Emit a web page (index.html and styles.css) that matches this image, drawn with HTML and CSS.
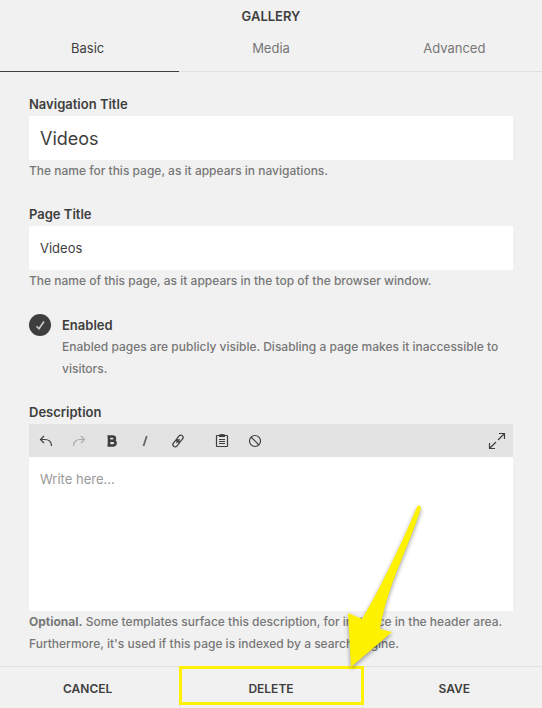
FILE: index.html
```html
<!DOCTYPE html>
<html lang="en">
<head>
    <meta charset="utf-8">
    <meta name="viewport" content="width=device-width, initial-scale=1">
    <title>Gallery Settings</title>
    <link rel="stylesheet" href="styles.css">
</head>
<body>
    <form class="dialog">
        <header class="dialog-header">
            <h1>GALLERY</h1>
            <nav class="tabs">
                <button type="button" class="tab active">Basic</button>
                <button type="button" class="tab">Media</button>
                <button type="button" class="tab">Advanced</button>
            </nav>
        </header>

        <main class="content">
            <div class="field">
                <label for="navTitle">Navigation Title</label>
                <input type="text" id="navTitle" class="large" value="Videos">
                <p class="help">The name for this page, as it appears in navigations.</p>
            </div>

            <div class="field">
                <label for="pageTitle">Page Title</label>
                <input type="text" id="pageTitle" value="Videos">
                <p class="help">The name of this page, as it appears in the top of the browser window.</p>
            </div>

            <div class="toggle">
                <span class="check">
                    <input type="checkbox" id="enabled" checked>
                    <svg viewBox="0 0 22 22" aria-hidden="true"><path d="M7.5 12.2 10 14.7 15 7.5"/></svg>
                </span>
                <div>
                    <label for="enabled">Enabled</label>
                    <p class="help">Enabled pages are publicly visible. Disabling a page makes it inaccessible to visitors.</p>
                </div>
            </div>

            <div class="field">
                <label for="description">Description</label>
                <div class="toolbar">
                    <button type="button" aria-label="Undo">
                        <svg viewBox="0 0 18 18"><path d="M7 4 3.5 7.5 7 11M3.7 7.5H7.5C11.5 7.5 14.5 9.5 14.5 14"/></svg>
                    </button>
                    <button type="button" aria-label="Redo" class="dim">
                        <svg viewBox="0 0 18 18"><path d="M11 4 14.5 7.5 11 11M14.3 7.5H10.5C6.5 7.5 3.5 9.5 3.5 14"/></svg>
                    </button>
                    <button type="button" aria-label="Bold">
                        <svg viewBox="0 0 18 18"><path class="thick" d="M4.5 4.5H9.5C12.7 4.5 12.7 8.7 9.5 8.7H5.5M9.5 8.7C13.6 8.7 13.6 13.5 9.7 13.5H4.5M6 3.2V14.8"/></svg>
                    </button>
                    <button type="button" aria-label="Italic">
                        <svg viewBox="0 0 18 18"><path class="medium" d="M10.8 4 7.5 14"/></svg>
                    </button>
                    <button type="button" aria-label="Link">
                        <svg viewBox="0 0 18 18"><g transform="rotate(-52 9 9)"><rect x="2.2" y="6.7" width="7.6" height="4.6" rx="2.3"/><rect x="8.2" y="6.7" width="7.6" height="4.6" rx="2.3"/><path d="M6.5 9H11.5"/></g></svg>
                    </button>
                    <button type="button" aria-label="Paste" class="group">
                        <svg viewBox="0 0 18 18"><rect x="3.5" y="3.5" width="11" height="11" rx="0.5"/><path class="fill" d="M6 2.5H7.5V2H10.5V2.5H12V5H6Z"/><path d="M6 7.5H12M6 9.5H12M6 11.5H12"/></svg>
                    </button>
                    <button type="button" aria-label="Clear formatting">
                        <svg viewBox="0 0 18 18"><circle cx="9" cy="9" r="5.5"/><path d="M5 5 13 13"/></svg>
                    </button>
                    <button type="button" aria-label="Expand" class="expand">
                        <svg viewBox="0 0 18 18"><path d="M10 8 16 2M11 1.5H16.5V7M8 10 2 16M1.5 11V16.5H7"/></svg>
                    </button>
                </div>
                <textarea id="description" placeholder="Write here..."></textarea>
                <p class="help"><strong>Optional.</strong> Some templates surface this description, for instance in the header area. Furthermore, it's used if this page is indexed by a search engine.</p>
            </div>
        </main>

        <footer class="actions">
            <button type="button">CANCEL</button>
            <div class="marked">
                <button type="button">DELETE</button>
                <span class="highlight"></span>
                <svg class="arrow" viewBox="0 0 52 168" aria-hidden="true"><path d="M4 164 1 110 15 116C34 84 53 44 70 4Q72.500 0 74 5C62 44 41 80 33 126L45 129Z"/></svg>
            </div>
            <button type="button">SAVE</button>
        </footer>
    </form>
</body>
</html>
```
FILE: styles.css
```css
* {
    box-sizing: border-box;
}
body {
    margin: 0;
    background-color: #f1f1f1;
    color: #3e3e3e;
    font-family: Inter, "Liberation Sans", sans-serif;
    font-size: 13px;
    overflow-x: hidden;
}
button, input, textarea {
    font: inherit;
    color: inherit;
    border: none;
    border-radius: 0;
    margin: 0;
    outline: none;
}
button {
    background: none;
    padding: 0;
    cursor: pointer;
}
.dialog {
    display: flex;
    flex-direction: column;
    min-height: 100vh;
}
h1 {
    margin: 0;
    font-size: 13px;
    font-weight: 600;
    line-height: 32px;
    text-align: center;
}
.tabs, .actions {
    display: grid;
    grid-template-columns: repeat(3, 1fr);
    margin: 0 -4px;
}
.tab {
    height: 40px;
    padding-bottom: 7px;
    border-bottom: 1px solid #e0e0e0;
    color: #777;
}
.tab.active {
    border-color: #3e3e3e;
    color: #3e3e3e;
}
.content {
    display: flex;
    flex-direction: column;
    flex: 1;
    gap: 20px;
    padding: 20px 29px 11px;
}
.field {
    display: flex;
    flex-direction: column;
}
label {
    font-weight: 600;
    line-height: 24px;
}
input[type="text"] {
    width: 100%;
    height: 44px;
    padding: 0 11px;
    background-color: #fff;
}
input.large {
    font-size: 18px;
}
.help {
    margin: 0;
    color: #777;
    font-size: 12px;
    font-weight: 500;
    line-height: 22px;
}
.help strong {
    font-weight: 700;
}
.toggle {
    display: flex;
    gap: 11px;
    padding-top: 2px;
}
.toggle label {
    display: block;
    line-height: 22px;
}
.check {
    display: grid;
    flex: none;
    width: 22px;
    height: 22px;
}
.check input, .check svg {
    grid-area: 1 / 1;
    width: 22px;
    height: 22px;
}
.check input {
    appearance: none;
    border-radius: 50%;
    background-color: #ccc;
}
.check input:checked {
    background-color: #3e3e3e;
}
.check svg {
    fill: none;
    stroke: #ccc;
    stroke-width: 1.6;
    pointer-events: none;
}
.toolbar {
    display: flex;
    align-items: center;
    gap: 15px;
    height: 33px;
    padding: 0 7px 0 8px;
    background-color: #e3e3e3;
}
.toolbar svg {
    display: block;
    width: 18px;
    height: 18px;
    fill: none;
    stroke: #3e3e3e;
    stroke-width: 1.2;
}
.toolbar .dim svg {
    stroke: #aaa;
}
.toolbar .thick {
    stroke-width: 2.6;
}
.toolbar .medium {
    stroke: #666;
    stroke-width: 1.8;
}
.toolbar .fill {
    fill: #3e3e3e;
    stroke: none;
}
.toolbar .group {
    margin-left: 11px;
}
.toolbar .expand {
    margin-left: auto;
}
textarea {
    display: block;
    width: 100%;
    height: 154px;
    padding: 11px;
    background-color: #fff;
    line-height: 22px;
    resize: none;
}
textarea::placeholder {
    color: #999;
}
.actions {
    border-top: 1px solid #e0e0e0;
}
.actions button {
    width: 100%;
    height: 41px;
    padding-top: 2px;
    font-size: 12px;
    font-weight: 600;
}
.marked {
    position: relative;
    border-left: 1px solid #e0e0e0;
    border-right: 1px solid #e0e0e0;
}
/* callout drawn over the delete button */
.highlight {
    position: absolute;
    inset: -1px -2px 3px -1px;
    border: 3px solid #fff200;
    pointer-events: none;
}
.arrow {
    position: absolute;
    right: -37px;
    bottom: 37px;
    width: 52px;
    height: 168px;
    overflow: visible;
    fill: #fff200;
    filter: drop-shadow(0 2px 2px rgba(0, 0, 0, 0.4));
    pointer-events: none;
}
```
